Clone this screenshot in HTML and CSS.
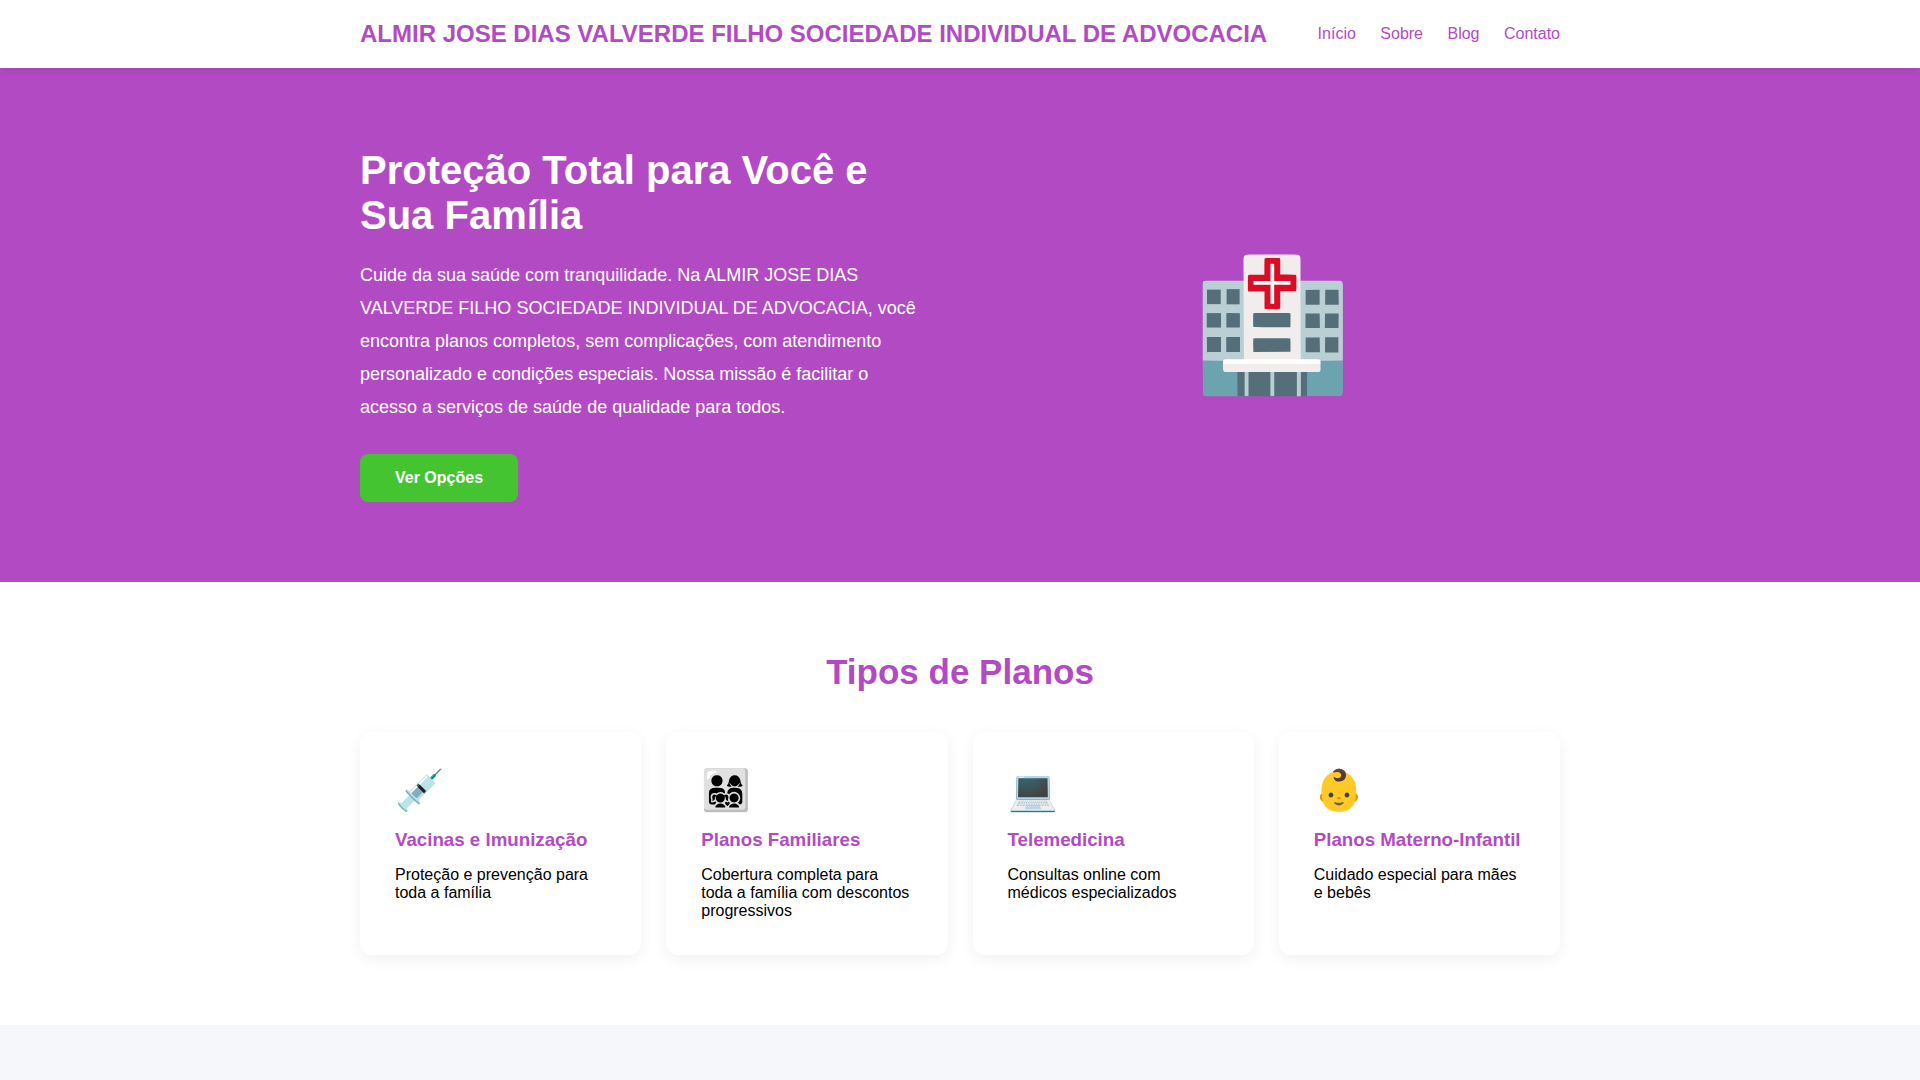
FILE: index.html
```html
<!DOCTYPE html>
<html lang="pt-BR">
<head>
    <meta charset="UTF-8">
    <meta name="viewport" content="width=device-width, initial-scale=1.0">
    <title>ALMIR JOSE DIAS VALVERDE FILHO SOCIEDADE INDIVIDUAL DE ADVOCACIA</title>
    <link rel="stylesheet" href="styles.css">
</head>
<body>
    <header>
        <div class="container nav">
            <div class="logo">ALMIR JOSE DIAS VALVERDE FILHO SOCIEDADE INDIVIDUAL DE ADVOCACIA</div>
            <nav class="menu">
                <a href="#inicio">Início</a>
                <a href="#sobre">Sobre</a>
                <a href="#blog">Blog</a>
                <a href="#contato">Contato</a>
            </nav>
        </div>
    </header>

    <section class="hero" id="inicio">
        <div class="container hero-grid">
            <div>
                <h1>Proteção Total para Você e Sua Família</h1>
                <p>Cuide da sua saúde com tranquilidade. Na ALMIR JOSE DIAS VALVERDE FILHO SOCIEDADE INDIVIDUAL DE ADVOCACIA, você encontra planos completos, sem complicações, com atendimento personalizado e condições especiais. Nossa missão é facilitar o acesso a serviços de saúde de qualidade para todos.</p>
                <a href="#planos" class="btn">Ver Opções</a>
            </div>
            <div class="hero-icon">🏥</div>
        </div>
    </section>

    <section class="plans" id="planos">
        <div class="container">
            <h2>Tipos de Planos</h2>
            <div class="cards">
                <div class="card">
                    <div class="icon">💉</div>
                    <h3>Vacinas e Imunização</h3>
                    <p>Proteção e prevenção para toda a família</p>
                </div>
                <div class="card">
                    <div class="icon">👨‍👩‍👧‍👦</div>
                    <h3>Planos Familiares</h3>
                    <p>Cobertura completa para toda a família com descontos progressivos</p>
                </div>
                <div class="card">
                    <div class="icon">💻</div>
                    <h3>Telemedicina</h3>
                    <p>Consultas online com médicos especializados</p>
                </div>
                <div class="card">
                    <div class="icon">👶</div>
                    <h3>Planos Materno-Infantil</h3>
                    <p>Cuidado especial para mães e bebês</p>
                </div>
            </div>
        </div>
    </section>

    <section class="about" id="sobre"></section>
</body>
</html>
```
FILE: styles.css
```css
* {
    margin: 0;
    padding: 0;
    box-sizing: border-box;
}
body {
    font-family: "Liberation Sans", Arial, sans-serif;
    background: #fff;
    color: #000;
}
.container {
    max-width: 1200px;
    margin: 0 auto;
}
header {
    position: relative;
    background: #fff;
    padding: 20px;
    box-shadow: 0 2px 10px rgba(0,0,0,0.1);
}
.nav {
    display: flex;
    justify-content: space-between;
    align-items: center;
}
.logo {
    font-size: 24px;
    font-weight: bold;
    color: #b24bc3;
}
.menu a {
    color: #b24bc3;
    text-decoration: none;
    margin-left: 20px;
}
.hero {
    background: #b24bc3;
    color: #fff;
    padding: 80px 20px;
}
.hero-grid {
    display: grid;
    grid-template-columns: 1fr 1fr;
    gap: 50px;
    align-items: center;
}
.hero h1 {
    font-size: 40px;
    margin-bottom: 21px;
}
.hero p {
    max-width: 560px;
    font-size: 18px;
    line-height: 33px;
    margin-bottom: 30px;
}
.btn {
    display: inline-block;
    background: #44c430;
    color: #fff;
    padding: 15px 35px;
    border-radius: 8px;
    font-weight: bold;
    text-decoration: none;
}
.hero-icon {
    font-size: 128px;
    text-align: center;
}
.plans {
    padding: 70px 20px;
}
.plans h2 {
    font-size: 35px;
    color: #b24bc3;
    text-align: center;
    margin-bottom: 40px;
}
.cards {
    display: grid;
    grid-template-columns: repeat(auto-fit, minmax(250px, 1fr));
    gap: 25px;
}
.card {
    background: #fff;
    padding: 35px;
    border-radius: 12px;
    box-shadow: 0 4px 15px rgba(0,0,0,0.06);
}
.icon {
    font-size: 40px;
    margin-bottom: 15px;
}
.card h3 {
    color: #b24bc3;
    margin-bottom: 15px;
}
.about {
    background: #f5f7fb;
    padding: 70px 20px;
}
```
